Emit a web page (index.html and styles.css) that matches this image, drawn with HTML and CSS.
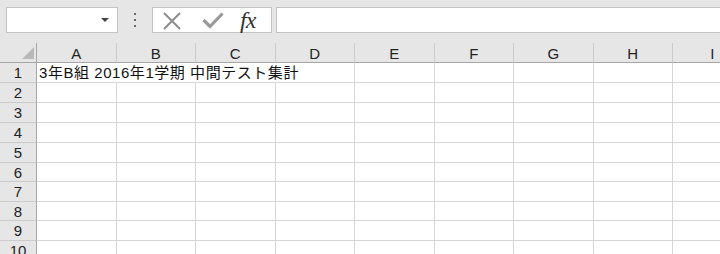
FILE: index.html
```html
<!DOCTYPE html>
<html lang="ja">
<head>
<meta charset="utf-8">
<link rel="stylesheet" href="styles.css">
</head>
<body>
<div class="app">
  <div class="toolbar">
    <div class="namebox"><span class="caret"></span></div>
    <div class="grip"><i></i><i></i><i></i></div>
    <div class="fxbox">
      <svg class="ico-x" width="20" height="18" viewBox="0 0 20 18"><path d="M2 1 L18 17 M18 1 L2 17" stroke="#8c8c8c" stroke-width="2" fill="none"/></svg>
      <svg class="ico-ok" width="22" height="17" viewBox="0 0 22 17"><path d="M1.5 8 L8 14.5 L20.5 1.5" stroke="#999" stroke-width="3.2" fill="none"/></svg>
      <span class="fx">fx</span>
    </div>
    <div class="formula"></div>
  </div>
  <div class="sheet">
    <div class="corner"><svg width="12" height="12" viewBox="0 0 12 12"><polygon points="12,0 12,12 0,12" fill="#b9b9b9"/></svg></div>
    <div class="ch">A</div><div class="ch">B</div><div class="ch">C</div><div class="ch">D</div><div class="ch">E</div><div class="ch">F</div><div class="ch">G</div><div class="ch">H</div><div class="ch">I</div>

    <div class="rh">1</div><div class="c span4"><span class="txt">3年B組 2016年1学期 中間テスト集計</span></div><div class="c"></div><div class="c"></div><div class="c"></div><div class="c"></div><div class="c"></div>
    <div class="rh">2</div><div class="c"></div><div class="c"></div><div class="c"></div><div class="c"></div><div class="c"></div><div class="c"></div><div class="c"></div><div class="c"></div><div class="c"></div>
    <div class="rh">3</div><div class="c"></div><div class="c"></div><div class="c"></div><div class="c"></div><div class="c"></div><div class="c"></div><div class="c"></div><div class="c"></div><div class="c"></div>
    <div class="rh">4</div><div class="c"></div><div class="c"></div><div class="c"></div><div class="c"></div><div class="c"></div><div class="c"></div><div class="c"></div><div class="c"></div><div class="c"></div>
    <div class="rh">5</div><div class="c"></div><div class="c"></div><div class="c"></div><div class="c"></div><div class="c"></div><div class="c"></div><div class="c"></div><div class="c"></div><div class="c"></div>
    <div class="rh">6</div><div class="c"></div><div class="c"></div><div class="c"></div><div class="c"></div><div class="c"></div><div class="c"></div><div class="c"></div><div class="c"></div><div class="c"></div>
    <div class="rh">7</div><div class="c"></div><div class="c"></div><div class="c"></div><div class="c"></div><div class="c"></div><div class="c"></div><div class="c"></div><div class="c"></div><div class="c"></div>
    <div class="rh">8</div><div class="c"></div><div class="c"></div><div class="c"></div><div class="c"></div><div class="c"></div><div class="c"></div><div class="c"></div><div class="c"></div><div class="c"></div>
    <div class="rh">9</div><div class="c"></div><div class="c"></div><div class="c"></div><div class="c"></div><div class="c"></div><div class="c"></div><div class="c"></div><div class="c"></div><div class="c"></div>
    <div class="rh">10</div><div class="c"></div><div class="c"></div><div class="c"></div><div class="c"></div><div class="c"></div><div class="c"></div><div class="c"></div><div class="c"></div><div class="c"></div>
  </div>
</div>
</body>
</html>
```
FILE: styles.css
```css
* { box-sizing: border-box; }
html, body { margin: 0; padding: 0; }
body {
  width: 720px;
  height: 254px;
  overflow: hidden;
  background: #e6e6e6;
  font-family: "Liberation Sans", Arial, "Noto Sans CJK JP", sans-serif;
  color: #1a1a1a;
}
.app { width: 720px; height: 254px; overflow: hidden; }

.toolbar {
  display: flex;
  align-items: flex-start;
  height: 43px;
  padding: 7px 0 0 6px;
}
.namebox {
  position: relative;
  width: 112px;
  height: 26px;
  background: #fff;
  border: 1px solid #c3c3c3;
}
.caret {
  position: absolute;
  right: 8px;
  top: 10px;
  width: 0; height: 0;
  border-left: 4px solid transparent;
  border-right: 4px solid transparent;
  border-top: 4px solid #444;
}
.grip {
  width: 34px;
  height: 26px;
  display: flex;
  flex-direction: column;
  align-items: center;
  justify-content: center;
  gap: 4px;
}
.grip i {
  display: block;
  width: 2px; height: 2px;
  background: #6a6a6a;
}
.fxbox {
  width: 120px;
  height: 26px;
  background: #fff;
  border: 1px solid #c3c3c3;
  display: flex;
  align-items: center;
  padding-left: 9px;
}
.ico-x { margin-top: 2px; }
.ico-ok { margin-left: 20px; margin-top: 1px; }
.fx {
  margin-left: 16px;
  font-family: "Liberation Serif", "Times New Roman", serif;
  font-style: italic;
  font-size: 24px;
  color: #333;
  letter-spacing: -1px;
  line-height: 24px;
}
.formula {
  flex: 1;
  margin-left: 4px;
  height: 26px;
  background: #fff;
  border: 1px solid #c3c3c3;
  border-right: none;
}

.sheet {
  display: grid;
  grid-template-columns: 37px repeat(9, 79.5px);
  grid-template-rows: 20px 20px 20px 20px 20px 20px 19px 20px 19px 20px 20px;
  width: 753px;
}
.corner {
  display: flex;
  align-items: flex-end;
  justify-content: flex-end;
  padding: 0 2px 3px 0;
  border-bottom: 1px solid #a6a6a6;
  border-right: 1px solid #a6a6a6;
  background: #e6e6e6;
}
.ch {
  background: #e6e6e6;
  border-bottom: 1px solid #a6a6a6;
  border-right: 1px solid #cbcbcb;
  font-size: 15px;
  text-align: center;
  line-height: 20px;
  color: #222;
  padding-top: 1px;
}
.rh {
  background: #e6e6e6;
  border-right: 1px solid #a6a6a6;
  border-bottom: 1px solid #cbcbcb;
  font-size: 15px;
  text-align: center;
  line-height: 19px;
  color: #222;
}
.c {
  background: #fff;
  border-right: 1px solid #d6d6d6;
  border-bottom: 1px solid #d6d6d6;
  overflow: visible;
  white-space: nowrap;
}
.span4 { grid-column: span 4; }
.txt {
  display: block;
  padding-left: 2px;
  font-family: "Liberation Sans", Arial, "Noto Sans CJK JP", sans-serif;
  font-size: 15px;
  letter-spacing: 0.55px;
  line-height: 19px;
  color: #111;
}
```
